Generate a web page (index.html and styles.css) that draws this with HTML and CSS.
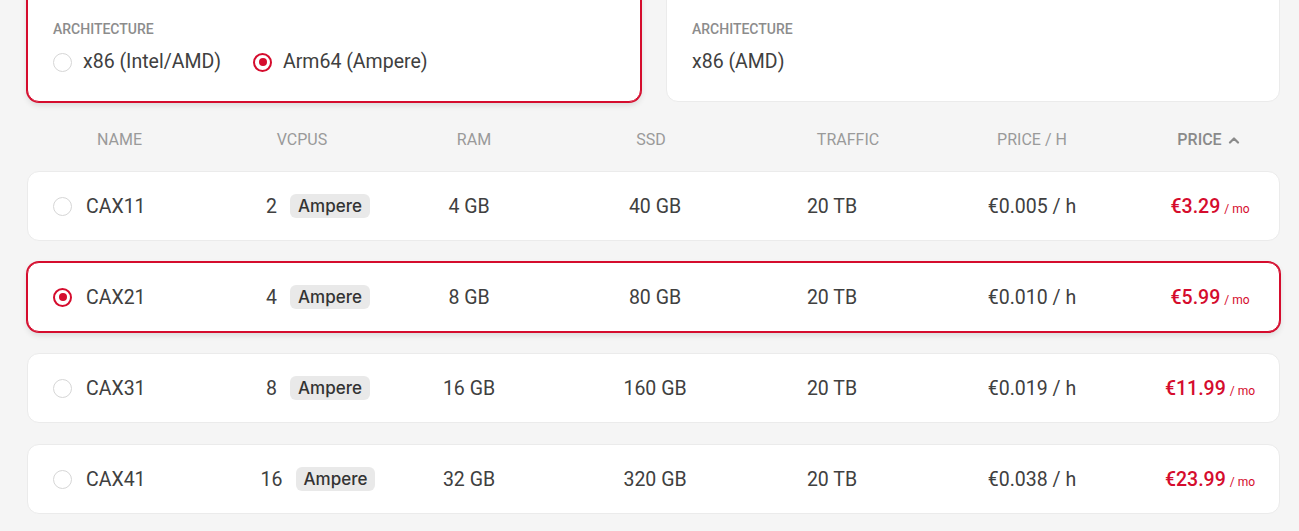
FILE: index.html
```html
<!DOCTYPE html>
<html lang="en">
<head>
<meta charset="utf-8">
<title>Server types</title>
<link rel="stylesheet" href="styles.css">
</head>
<body>
<div class="page">
  <section class="arch-grid">
    <div class="card selected">
      <div class="card-label">Architecture</div>
      <div class="options">
        <label class="option"><span class="radio"></span><span>x86 (Intel/AMD)</span></label>
        <label class="option"><span class="radio on"></span><span>Arm64 (Ampere)</span></label>
      </div>
    </div>
    <div class="card">
      <div class="card-label">Architecture</div>
      <div class="options"><span>x86 (AMD)</span></div>
    </div>
  </section>

  <div class="thead">
    <div class="th th-name">Name</div>
    <div class="th">vCPUs</div>
    <div class="th">RAM</div>
    <div class="th">SSD</div>
    <div class="th">Traffic</div>
    <div class="th">Price / h</div>
    <div class="th th-sort">Price
      <svg class="chev" width="12" height="8" viewBox="0 0 12 8"><polyline points="2,6.5 6,2.5 10,6.5" fill="none" stroke="#8a8a8a" stroke-width="2.2" stroke-linecap="round" stroke-linejoin="round"/></svg>
    </div>
  </div>

  <div class="rows">
    <div class="row">
      <div class="cell name"><span class="radio"></span>CAX11</div>
      <div class="cell cpu"><span>2</span><span class="badge">Ampere</span></div>
      <div class="cell">4 GB</div>
      <div class="cell">40 GB</div>
      <div class="cell">20 TB</div>
      <div class="cell">€0.005 / h</div>
      <div class="cell price"><span class="amount">€3.29</span><span class="per">/ mo</span></div>
    </div>
    <div class="row selected">
      <div class="cell name"><span class="radio on"></span>CAX21</div>
      <div class="cell cpu"><span>4</span><span class="badge">Ampere</span></div>
      <div class="cell">8 GB</div>
      <div class="cell">80 GB</div>
      <div class="cell">20 TB</div>
      <div class="cell">€0.010 / h</div>
      <div class="cell price"><span class="amount">€5.99</span><span class="per">/ mo</span></div>
    </div>
    <div class="row">
      <div class="cell name"><span class="radio"></span>CAX31</div>
      <div class="cell cpu"><span>8</span><span class="badge">Ampere</span></div>
      <div class="cell">16 GB</div>
      <div class="cell">160 GB</div>
      <div class="cell">20 TB</div>
      <div class="cell">€0.019 / h</div>
      <div class="cell price"><span class="amount">€11.99</span><span class="per">/ mo</span></div>
    </div>
    <div class="row">
      <div class="cell name"><span class="radio"></span>CAX41</div>
      <div class="cell cpu"><span>16</span><span class="badge">Ampere</span></div>
      <div class="cell">32 GB</div>
      <div class="cell">320 GB</div>
      <div class="cell">20 TB</div>
      <div class="cell">€0.038 / h</div>
      <div class="cell price"><span class="amount">€23.99</span><span class="per">/ mo</span></div>
    </div>
  </div>
</div>
</body>
</html>
```

FILE: styles.css
```css
* { box-sizing: border-box; }
html, body { margin: 0; padding: 0; }
body {
  background: #f5f5f5;
  font-family: Roboto, "Liberation Sans", Arial, sans-serif;
  color: #404040;
  overflow: hidden;
}
.page {
  width: 1253px;
  margin: -20px 0 0 27px;
}
.arch-grid {
  display: grid;
  grid-template-columns: 614px 614px;
  gap: 25px;
}
.card {
  background: #fff;
  border: 1px solid #ebebeb;
  border-radius: 12px;
  padding: 40px 25px 27px 25px;
}
.selected {
  border-color: #d50c2d;
  box-shadow: 0 0 0 1px #d50c2d, 0 3px 6px rgba(0, 0, 0, 0.12);
}
.card-label {
  font-size: 14px;
  line-height: 16px;
  font-weight: 500;
  text-transform: uppercase;
  color: #8c8c8c;
}
.options {
  margin-top: 13px;
  display: flex;
  align-items: center;
  gap: 32px;
  font-size: 19.5px;
  line-height: 24px;
  color: #404040;
}
.option {
  display: flex;
  align-items: center;
  gap: 11px;
}
.radio {
  width: 19px;
  height: 19px;
  border-radius: 50%;
  border: 1.5px solid #d6d6d6;
  background: #fff;
  flex: none;
  display: inline-flex;
  align-items: center;
  justify-content: center;
}
.radio.on {
  border: 2px solid #d50c2d;
}
.radio.on::after {
  content: "";
  width: 8px;
  height: 8px;
  border-radius: 50%;
  background: #d50c2d;
}
.thead {
  margin-top: 28px;
  display: grid;
  grid-template-columns: 162px 226px 118px 236px 158px 210px 143px;
  font-size: 16px;
  line-height: 20px;
  text-transform: uppercase;
  color: #9a9a9a;
}
.th { text-align: center; white-space: nowrap; }
.th-name { text-align: left; padding-left: 70px; }
.th-sort {
  font-weight: 500;
  color: #8a8a8a;
  display: flex;
  align-items: center;
  justify-content: center;
  gap: 6px;
}
.chev { display: block; }
.rows {
  margin-top: 21px;
  display: flex;
  flex-direction: column;
  gap: 21px;
}
.row {
  height: 70px;
  background: #fff;
  border: 1px solid #ebebeb;
  border-radius: 12px;
  display: grid;
  grid-template-columns: 190px 150px 152px 220px 134px 266px 90px;
  align-items: center;
  padding: 0 24px 0 25px;
  font-size: 19.5px;
  color: #404040;
}
.row.selected { border-color: #d50c2d; }
.cell {
  justify-self: center;
  white-space: nowrap;
}
.cell.name {
  justify-self: start;
  display: flex;
  align-items: center;
  gap: 14px;
}
.cell.cpu {
  display: flex;
  align-items: center;
  gap: 13px;
}
.badge {
  font-family: Inter, Roboto, sans-serif;
  font-size: 17px;
  font-weight: 500;
  color: #333;
  background: #e9e9e9;
  border-radius: 6px;
  height: 24px;
  line-height: 24px;
  padding: 0 8px;
}
.price {
  display: flex;
  align-items: baseline;
  gap: 4px;
  color: #d50c2d;
}
.amount { font-weight: 500; }
.per { font-size: 12px; }
```
